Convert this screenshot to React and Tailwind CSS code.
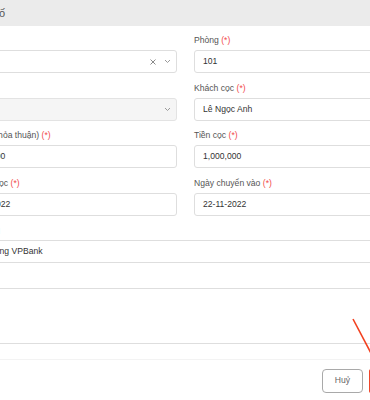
import React from 'react';

const Label = ({ text, req }) => (
  <div className="h-[12px] leading-[12px] text-[8.6px] text-[#555] mb-[4px] whitespace-nowrap">
    {text}
    {req && <span className="text-[#f24b4b]"> (*)</span>}
  </div>
);

const Chevron = () => (
  <svg width="7" height="5" viewBox="0 0 7 5" fill="none" stroke="#9a9a9a" strokeWidth="1" className="shrink-0">
    <path d="M1 1l2.5 2.5L6 1" />
  </svg>
);

const Clear = () => (
  <svg width="6" height="6" viewBox="0 0 6 6" fill="none" stroke="#8a8a8a" strokeWidth="1" className="shrink-0">
    <path d="M0.5 0.5l5 5M5.5 0.5l-5 5" />
  </svg>
);

function Field({ label, req, value, disabled, select, clear }) {
  return (
    <div>
      <Label text={label} req={req} />
      <div
        className={`h-[23px] border rounded-[3px] flex items-center pl-[8px] text-[8.6px] text-[#333] whitespace-nowrap ${
          select ? 'pr-[5px]' : 'pr-[8px]'
        } ${disabled ? 'bg-[#f5f5f5] border-[#e3e3e3]' : 'bg-white border-[#dedede]'}`}
      >
        <span className="flex-1">{value}</span>
        {clear && <span className="mr-[8px] flex"><Clear /></span>}
        {select && <span className="flex"><Chevron /></span>}
      </div>
    </div>
  );
}

export default function App() {
  return (
    <div className="relative w-[370px] h-[400px] overflow-hidden bg-white font-['Liberation_Sans',Arial,sans-serif]">
      {/* Header */}
      <div className="h-[26px] bg-[#ebebeb] flex items-center">
        <div className="w-[5px] flex justify-end whitespace-nowrap text-[11px] text-[#555]">
          Sửa phiếu cọc số
        </div>
      </div>

      {/* Body */}
      <div className="ml-[-42px] w-[455px] pt-[8px] grid grid-cols-[219px_219px] gap-x-[17px] gap-y-[8.5px]">
        <Field label="Nhà" req value="Nhà A" select clear />
        <Field label="Phòng" req value="101" />
        <Field label="Tầng" req disabled select />
        <Field label="Khách cọc" req value="Lê Ngọc Anh" />
        <Field label="Giá thuê (thỏa thuận)" req value="3,000,000" />
        <Field label="Tiền cọc" req value="1,000,000" />
        <Field label="Ngày đặt cọc" req value="20-11-2022" />
        <Field label="Ngày chuyển vào" req value="22-11-2022" />
        <div className="col-span-2">
          <Field label="Ngân hàng" value="Ngân hàng VPBank" />
        </div>
        <div className="col-span-2">
          <Label text="Ghi chú" />
          <div className="h-[56px] border border-[#dedede] rounded-[3px] bg-white" />
        </div>
      </div>

      {/* Footer */}
      <div className="mt-[15px] border-t border-[#f3f3f3] pt-[9px] pl-[322px] flex gap-[6px]">
        <button className="h-[24px] w-[41px] shrink-0 border border-[#a9a9a9] rounded-[4px] bg-white text-[8.6px] text-[#666]">
          Huỷ
        </button>
        <button className="h-[24px] w-[50px] shrink-0 border-2 border-[#f0462a] rounded-[2px] bg-white text-[8.6px] text-[#333]">
          Lưu
        </button>
      </div>

      {/* Annotation arrow */}
      <svg className="absolute left-0 top-0 pointer-events-none" width="370" height="400">
        <line x1="353" y1="319" x2="372" y2="355" stroke="#f2401f" strokeWidth="1.6" />
      </svg>
    </div>
  );
}
